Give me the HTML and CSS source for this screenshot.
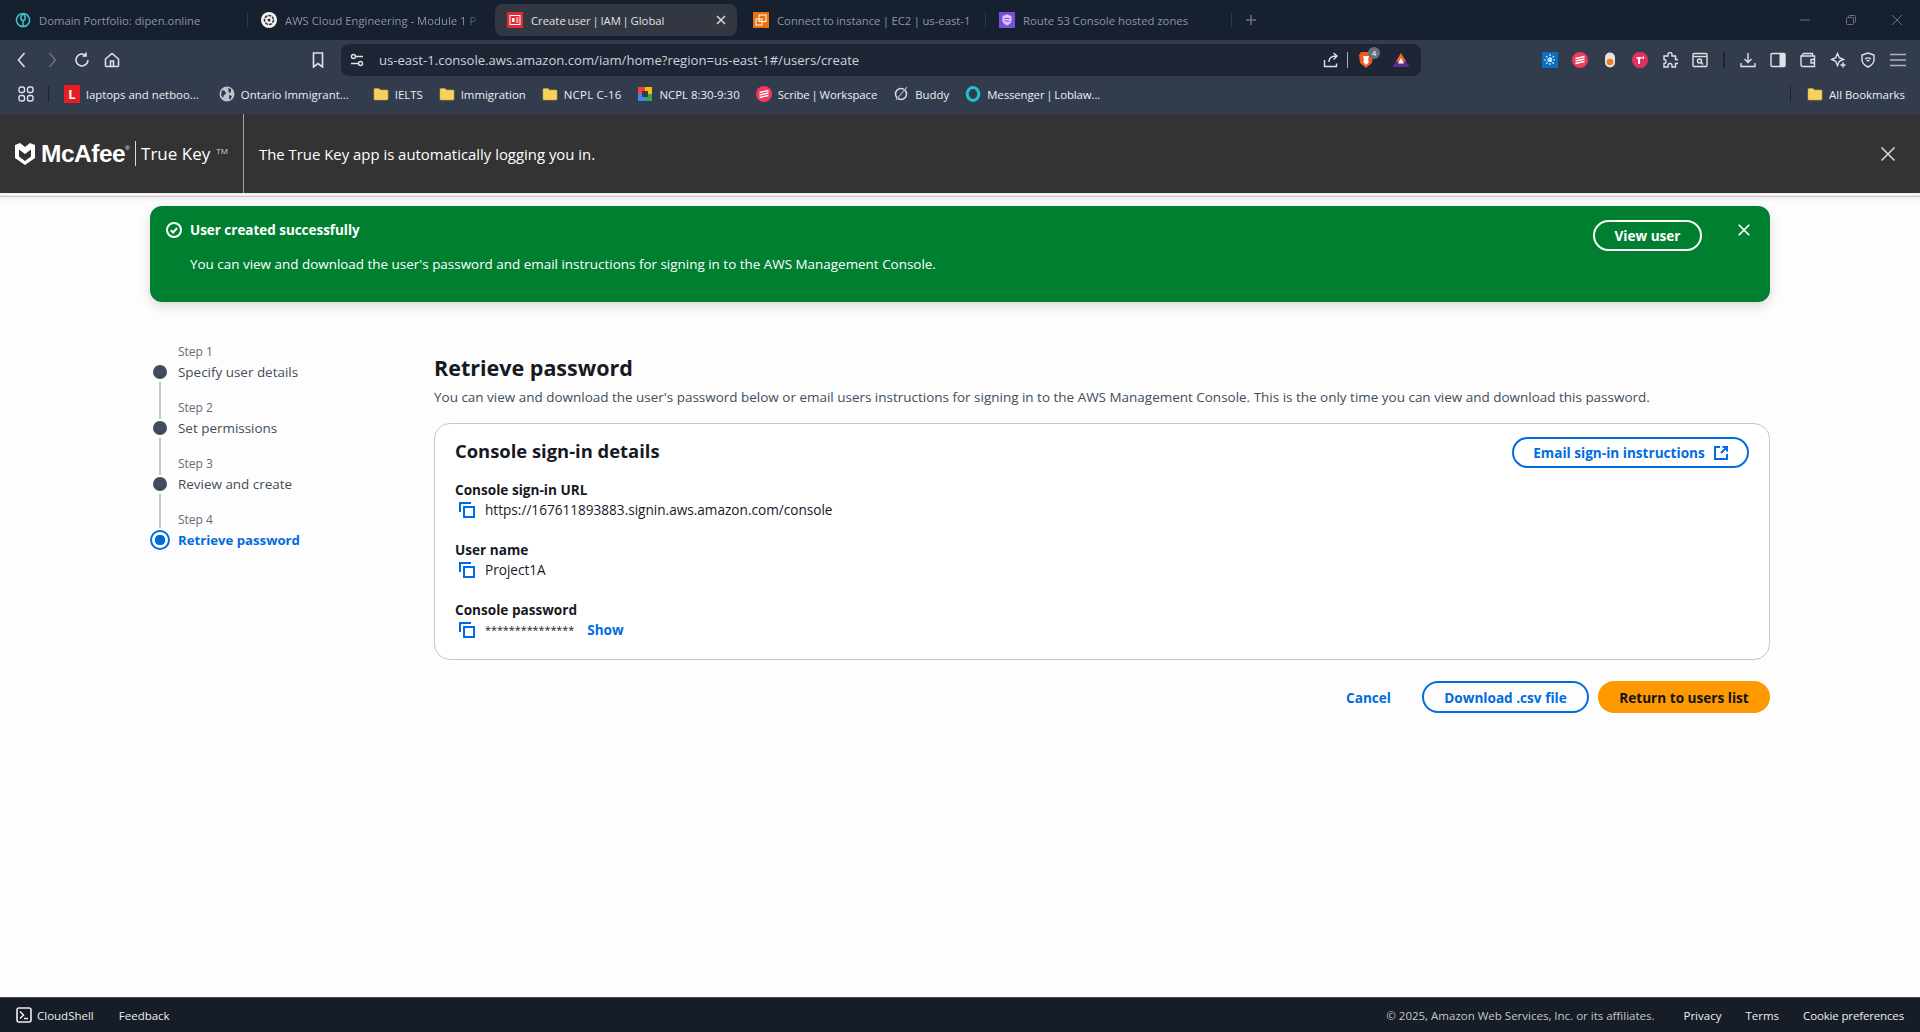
FILE: index.html
```html
<!DOCTYPE html>
<html lang="en">
<head>
    <meta charset="UTF-8">
    <title>Create user | IAM | Global</title>
    <link rel="stylesheet" href="styles.css">
</head>
<body>

    <!-- browser tabs -->
    <div class="tabstrip">
        <div class="tab tab-first">
            <svg class="fav" viewBox="0 0 16 16"><path d="M8 1.500a6.500 6.500 0 1 0 .01 0M8 1.500C5 5 5 8 8 8.500M8 14.500V8.500C11 8 11 5 8 1.500" fill="none" stroke="#3fc1c9" stroke-width="1.500"/></svg>
            <span class="tab-title">Domain Portfolio: dipen.online</span>
        </div>
        <div class="tab tab-sep">
            <svg class="fav" viewBox="0 0 16 16"><circle cx="8" cy="8" r="8" fill="#f2f2f2"/><circle cx="8" cy="8" r="4.500" fill="none" stroke="#333" stroke-width="1.600" stroke-dasharray="3 1"/><circle cx="8" cy="8" r="1.500" fill="#333"/></svg>
            <span class="tab-title tab-fade">AWS Cloud Engineering - Module 1 P</span>
        </div>
        <div class="tab tab-active">
            <svg class="fav" viewBox="0 0 16 16"><rect width="16" height="16" fill="#dd2b36"/><rect x="3" y="3.500" width="10" height="9" fill="none" stroke="#fff"/><rect x="5" y="6" width="2.500" height="4" fill="#fff"/><path d="M9 6h2.500M9 8h2.500M9 10h2.500" stroke="#fff"/></svg>
            <span class="tab-title">Create user | IAM | Global</span>
            <svg class="tab-close" viewBox="0 0 10 10"><path d="M1 1l8 8M9 1l-8 8" stroke="#d8dade" stroke-width="1.500"/></svg>
        </div>
        <div class="tab tab-fourth">
            <svg class="fav" viewBox="0 0 16 16"><rect width="16" height="16" fill="#e8730c"/><rect x="6" y="3" width="7" height="6.500" fill="none" stroke="#fff"/><rect x="3" y="7" width="6" height="6" fill="none" stroke="#fff"/></svg>
            <span class="tab-title">Connect to instance | EC2 | us-east-1</span>
        </div>
        <div class="tab tab-sep">
            <svg class="fav" viewBox="0 0 16 16"><rect width="16" height="16" fill="#7a4fd8"/><path d="M8 2.500l4.500 1.500v4.500c0 2.500-2.500 4-4.500 5-2-1-4.500-2.500-4.500-5V4z" fill="#d8c8f6"/><path d="M5.500 6.500h5M5.500 9h5" stroke="#7a4fd8"/></svg>
            <span class="tab-title">Route 53 Console hosted zones</span>
        </div>
        <div class="tab-sep new-tab">
            <svg viewBox="0 0 12 12"><path d="M6 1v10M1 6h10" stroke="#69717e" stroke-width="1.500"/></svg>
        </div>
        <div class="win-controls">
            <svg viewBox="0 0 12 12"><path d="M1 6h10" stroke="#69717e"/></svg>
            <svg viewBox="0 0 12 12"><rect x="1.500" y="3.500" width="7" height="7" rx="1" fill="none" stroke="#69717e"/><path d="M3.500 3.500V2.500a1 1 0 0 1 1-1h5a1 1 0 0 1 1 1v5a1 1 0 0 1-1 1" fill="none" stroke="#69717e"/></svg>
            <svg viewBox="0 0 12 12"><path d="M1 1l10 10M11 1L1 11" stroke="#69717e"/></svg>
        </div>
    </div>

    <!-- address bar row -->
    <div class="toolbar">
        <div class="tool"><svg viewBox="0 0 16 16"><path d="M10.500 1L4.500 8l6 7" class="line"/></svg></div>
        <div class="tool"><svg viewBox="0 0 16 16"><path d="M5.500 1l6 7-6 7" class="line line-dim"/></svg></div>
        <div class="tool"><svg viewBox="0 0 16 16"><path d="M14 8a6 6 0 1 1-2-4.500M12 .5v3.500H8.500" class="line"/></svg></div>
        <div class="tool"><svg viewBox="0 0 16 16"><path d="M1.500 7L8 1.500 14.500 7v6.500a1 1 0 0 1-1 1h-11a1 1 0 0 1-1-1zM6.500 14.500V9h3v5.500" class="line"/></svg></div>
        <div class="tool tool-mark"><svg viewBox="0 0 16 16"><path d="M3.500 1h9v14L8 11.500 3.500 15z" class="line"/></svg></div>

        <div class="address">
            <svg class="addr-icon" viewBox="0 0 16 16"><circle cx="4.500" cy="4.500" r="2" class="line thin"/><circle cx="11.500" cy="11.500" r="2" class="line thin"/><path d="M7 4.500h7M2 11.500h7" class="line thin"/></svg>
            <span class="url">us-east-1.console.aws.amazon.com/iam/home?region=us-east-1#/users/create</span>
            <div class="addr-right">
                <svg class="addr-icon" viewBox="0 0 16 16"><path d="M1.500 8v6.500h12v-3M6 10c0-4 3-6 7-6M10.500 1l3.500 3-3.500 3.500" class="line thin"/></svg>
                <span class="addr-sep"></span>
                <span class="brave">
                    <svg viewBox="0 0 16 18"><path d="M3 1h10l2 3-1 8-6 5-6-5-1-8z" fill="#f15a22"/><path d="M5 5h6l-1 4 1 2-3 3-3-3 1-2z" fill="#fff"/></svg>
                    <span class="brave-badge">4</span>
                </span>
                <svg class="rewards" viewBox="0 0 18 16"><path d="M9 1l8.500 14H.5z" fill="#5e2a90"/><path d="M9 1l5 8.500H4z" fill="#f26b21"/><path d="M9 6l3 5.500H6z" fill="#fff"/></svg>
            </div>
        </div>

        <div class="tool-right">
            <div class="tool"><svg viewBox="0 0 16 16"><rect width="16" height="16" rx="1" fill="#0a6fc2"/><path d="M8 2v12M2 8h12M4 4l8 8M12 4l-8 8" stroke="#dff1ff" stroke-width="1.200" stroke-dasharray="2 1"/></svg></div>
            <div class="tool"><svg viewBox="0 0 16 16"><circle cx="8" cy="8" r="8" fill="#f0395f"/><path d="M3.500 6.500l9-2M3.500 9l9-2M3.500 11.500l9-2" stroke="#fff" stroke-width="1.300"/></svg></div>
            <div class="tool"><svg viewBox="0 0 16 16"><rect x="3" y="0.500" width="10" height="15" rx="5" fill="#e8e4dc"/><circle cx="8" cy="10" r="3.300" fill="#f07a22"/></svg></div>
            <div class="tool"><svg viewBox="0 0 16 16"><circle cx="8" cy="8" r="8" fill="#e8305f"/><path d="M4.500 5h5v1.800H8V12H6V6.800H4.500zM10.500 4.500h1.500V7h-1.500z" fill="#fff"/></svg></div>
            <div class="tool"><svg viewBox="0 0 16 16"><path d="M6 2.500a2 2 0 0 1 4 0V4h3.500v3.500H15a2 2 0 0 1 0 4h-1.500V15H10v-1.500a2 2 0 0 0-4 0V15H2v-3.500a2 2 0 0 0 0-4V4h4z" class="line thin"/></svg></div>
            <div class="tool"><svg viewBox="0 0 16 16"><rect x="1" y="1.500" width="14" height="13" rx="1" class="line thin"/><path d="M1 4.500h14" class="line thin"/><circle cx="7.500" cy="9" r="2" class="line thin"/><path d="M9 10.500l2 2" class="line thin"/></svg></div>
            <span class="tool-sep"></span>
            <div class="tool"><svg viewBox="0 0 16 16"><path d="M8 1v9M4.500 7L8 10.500 11.500 7M1 11v3.500h14V11" class="line thin"/></svg></div>
            <div class="tool"><svg viewBox="0 0 16 16"><rect x="1" y="1.500" width="14" height="13" rx="1" class="line thin"/><rect x="9.500" y="1.500" width="5.500" height="13" fill="#dfe2e7"/></svg></div>
            <div class="tool"><svg viewBox="0 0 16 16"><path d="M2.500 4V3a1.500 1.500 0 0 1 1.500-1.500h8.500V4M1 4h13.500v10.500H2.500A1.500 1.500 0 0 1 1 13zM15 7.500h-4v3.500h4" class="line thin"/></svg></div>
            <div class="tool"><svg viewBox="0 0 16 16"><path d="M7.500 1.500l1.800 4.200 4.200 1.800-4.200 1.800-.8 2-1 2.200-1.800-4.200L1.500 7.500l4.200-1.800z" class="line thin"/><path d="M13 10.500v5M10.500 13h5" stroke="#dfe2e7" stroke-width="1.500"/></svg></div>
            <div class="tool"><svg viewBox="0 0 16 16"><path d="M8 1l6 2v5c0 3.500-3 5.500-6 7-3-1.500-6-3.500-6-7V3zM5 7c2-1.500 4-1.500 6 0M6.500 9c1-.7 2-.7 3 0" class="line thin"/></svg></div>
            <div class="tool"><svg viewBox="0 0 16 16"><path d="M0 2.500h16M0 8h16M0 13.500h16" stroke="#aeb3bb" stroke-width="1.500"/></svg></div>
        </div>
    </div>

    <!-- bookmarks -->
    <div class="bookmarks">
        <svg class="apps" viewBox="0 0 16 16"><rect x="1" y="1" width="5.500" height="5.500" rx="2" class="line thin"/><rect x="9.500" y="1" width="5.500" height="5.500" rx="2" class="line thin"/><rect x="1" y="9.500" width="5.500" height="5.500" rx="2" class="line thin"/><rect x="9.500" y="9.500" width="5.500" height="5.500" rx="2" class="line thin"/></svg>
        <span class="bm-sep bm-sep-first"></span>
        <div class="bm bm-laptops"><span class="bm-l">L</span><span>laptops and netboo...</span></div>
        <div class="bm bm-ontario"><svg viewBox="0 0 16 16"><circle cx="8" cy="8" r="7.500" fill="#bfc3ca"/><path d="M3 4l3 1 1 3-2 1-1 3-2-3zM9 2l3 1v3l-2 1zM10 9l3 1-2 4-1-2z" fill="#333c4d"/></svg><span>Ontario Immigrant...</span></div>
        <div class="bm bm-ielts"><svg viewBox="0 0 16 14"><use href="#folder"/></svg><span>IELTS</span></div>
        <div class="bm"><svg viewBox="0 0 16 14"><use href="#folder"/></svg><span>Immigration</span></div>
        <div class="bm"><svg viewBox="0 0 16 14"><use href="#folder"/></svg><span class="bm-ncpl">NCPL C-16</span></div>
        <div class="bm"><svg viewBox="0 0 16 16"><rect x="1" y="1" width="7" height="7" fill="#e8453c"/><rect x="8" y="1" width="7" height="7" fill="#fbbc04"/><rect x="1" y="8" width="7" height="7" fill="#4285f4"/><rect x="8" y="8" width="7" height="7" fill="#34a853"/><rect x="5" y="5" width="6" height="6" fill="#333c4d"/></svg><span>NCPL 8:30-9:30</span></div>
        <div class="bm"><svg viewBox="0 0 16 16"><circle cx="8" cy="8" r="8" fill="#f0395f"/><path d="M3.500 6.500l9-2M3.500 9l9-2M3.500 11.500l9-2" stroke="#fff" stroke-width="1.300"/></svg><span class="bm-scribe">Scribe | Workspace</span></div>
        <div class="bm"><svg viewBox="0 0 16 16"><circle cx="8" cy="8" r="5.500" fill="none" stroke="#d8dade" stroke-width="1.500"/><path d="M3 14L14 1" stroke="#9aa0a9" stroke-width="1.200"/></svg><span>Buddy</span></div>
        <div class="bm"><svg viewBox="0 0 16 16"><ellipse cx="8" cy="8" rx="5.800" ry="6.500" fill="none" stroke="#1fc1cf" stroke-width="3"/></svg><span class="bm-scribe">Messenger | Loblaw...</span></div>
        <div class="bm-end">
            <span class="bm-sep"></span>
            <div class="bm"><svg viewBox="0 0 16 14"><use href="#folder"/></svg><span>All Bookmarks</span></div>
        </div>
    </div>

    <!-- true key banner -->
    <div class="truekey">
        <div class="tk-brand">
            <svg class="tk-shield" viewBox="0 0 20 22"><path d="M0 2l5-2 5 4 5-4 5 2v13l-10 7-10-7z" fill="#fff"/><path d="M4 6.500v7l6 4.500 6-4.500v-7L10 11z" fill="#333"/></svg>
            <span class="tk-mcafee">McAfee<span class="tk-reg">®</span></span>
            <span class="tk-divider"></span>
            <span class="tk-product">True Key</span>
            <span class="tk-tm">TM</span>
        </div>
        <div class="tk-message">The True Key app is automatically logging you in.</div>
        <svg class="tk-close" viewBox="0 0 16 16"><path d="M1.500 1.500l13 13M14.500 1.500l-13 13" stroke="#d8dade" stroke-width="1.500"/></svg>
    </div>
    <div class="tk-edge"></div>

    <!-- console page -->
    <main class="page">
        <div class="flash">
            <svg class="flash-icon" viewBox="0 0 16 16"><circle cx="8" cy="8" r="7" fill="none" stroke="#fff" stroke-width="2"/><path d="M4.800 8.200l2.300 2.300 4-4.500" fill="none" stroke="#fff" stroke-width="2"/></svg>
            <div class="flash-body">
                <div class="flash-title">User created successfully</div>
                <div class="flash-text">You can view and download the user's password and email instructions for signing in to the AWS Management Console.</div>
            </div>
            <button class="btn btn-flash">View user</button>
            <svg class="flash-close" viewBox="0 0 16 16"><path d="M2 2l12 12M14 2L2 14" stroke="#fff" stroke-width="2"/></svg>
        </div>

        <div class="wizard">
            <ol class="steps">
                <li class="step">
                    <div class="step-mark"><span class="step-line step-line-none"></span><span class="step-dot"></span></div>
                    <div class="step-text"><small>Step 1</small><span>Specify user details</span></div>
                </li>
                <li class="step">
                    <div class="step-mark"><span class="step-line"></span><span class="step-dot"></span></div>
                    <div class="step-text"><small>Step 2</small><span>Set permissions</span></div>
                </li>
                <li class="step">
                    <div class="step-mark"><span class="step-line"></span><span class="step-dot"></span></div>
                    <div class="step-text"><small>Step 3</small><span>Review and create</span></div>
                </li>
                <li class="step step-current">
                    <div class="step-mark"><span class="step-line"></span><span class="step-ring"></span></div>
                    <div class="step-text"><small>Step 4</small><span>Retrieve password</span></div>
                </li>
            </ol>

            <div class="content">
                <h1>Retrieve password</h1>
                <p class="lead">You can view and download the user's password below or email users instructions for signing in to the AWS Management Console. This is the only time you can view and download this password.</p>

                <section class="card">
                    <div class="card-head">
                        <h2>Console sign-in details</h2>
                        <button class="btn btn-normal btn-email">Email sign-in instructions
                            <svg viewBox="0 0 14 14"><path d="M6 1H1v12h12V8M8.500 1H13v4.500M13 1L7 7" fill="none" stroke="currentColor" stroke-width="2"/></svg>
                        </button>
                    </div>

                    <div class="field">
                        <div class="field-label">Console sign-in URL</div>
                        <div class="field-value"><svg class="copy" viewBox="0 0 16 16"><use href="#copy"/></svg><span>https://167611893883.signin.aws.amazon.com/console</span></div>
                    </div>
                    <div class="field">
                        <div class="field-label">User name</div>
                        <div class="field-value"><svg class="copy" viewBox="0 0 16 16"><use href="#copy"/></svg><span>Project1A</span></div>
                    </div>
                    <div class="field">
                        <div class="field-label">Console password</div>
                        <div class="field-value"><svg class="copy" viewBox="0 0 16 16"><use href="#copy"/></svg><span class="stars">***************</span><a class="show" href="#">Show</a></div>
                    </div>
                </section>

                <div class="actions">
                    <a class="cancel" href="#">Cancel</a>
                    <button class="btn btn-normal btn-download">Download .csv file</button>
                    <button class="btn btn-primary">Return to users list</button>
                </div>
            </div>
        </div>
    </main>

    <footer class="shell-foot">
        <svg class="shell-icon" viewBox="0 0 16 16"><rect x="1" y="1" width="14" height="14" rx="2" fill="none" stroke="#eceef1" stroke-width="1.600"/><path d="M4 4.500L7.500 8 4 11.500M8 11.500h4" fill="none" stroke="#eceef1" stroke-width="1.500"/></svg>
        <span class="foot-cloud">CloudShell</span>
        <span class="foot-feedback">Feedback</span>
        <span class="foot-copy">© 2025, Amazon Web Services, Inc. or its affiliates.</span>
        <span class="foot-link">Privacy</span>
        <span class="foot-link">Terms</span>
        <span class="foot-link foot-cookie">Cookie preferences</span>
    </footer>

    <!-- shared icons -->
    <svg class="defs" aria-hidden="true">
        <symbol id="folder" viewBox="0 0 16 14"><path d="M1 2.500a1 1 0 0 1 1-1h4l1.500 1.500H14a1 1 0 0 1 1 1v8a1 1 0 0 1-1 1H2a1 1 0 0 1-1-1z" fill="#f7d15e" stroke="#c9a440" stroke-width=".6"/></symbol>
        <symbol id="copy" viewBox="0 0 16 16"><path d="M1 10V1h11" fill="none" stroke="#006ce0" stroke-width="2"/><rect x="5" y="5" width="10" height="10" fill="none" stroke="#006ce0" stroke-width="2"/></symbol>
    </svg>

</body>
</html>
```

FILE: styles.css
```css
/* General styling */
* {
    box-sizing: border-box;
}

body {
    margin: 0;
    height: 1032px;
    overflow: hidden;
    display: flex;
    flex-direction: column;
    font-family: 'Open Sans', sans-serif;
    background-color: #fdfdfd;
    color: #16191f;
}

.line {
    fill: none;
    stroke: #dfe2e7;
    stroke-width: 1.6;
}

.line-dim {
    stroke: #69717e;
}

.thin {
    stroke-width: 1.4;
}

.defs {
    display: none;
}

/* Tabs */
.tabstrip {
    height: 40px;
    flex-shrink: 0;
    display: flex;
    align-items: flex-start;
    background-color: #17202f;
    font-size: 11.3px;
    color: #8d95a2;
}

.tab {
    height: 40px;
    width: 246px;
    display: flex;
    align-items: center;
    gap: 8px;
    padding-left: 14px;
}

.tab-first {
    width: 247px;
    padding-left: 15px;
}

.tab-sep {
    background: linear-gradient(#2f3848, #2f3848) left center / 1px 16px no-repeat;
}

.tab-active {
    width: 242px;
    height: 32px;
    margin: 4px 0 0 2px;
    padding: 0 11px 0 12px;
    border-radius: 8px;
    background-color: #333741;
    color: #dfe2e7;
    word-spacing: -1.2px;
}

.tab-fourth {
    width: 248px;
    padding-left: 16px;
    word-spacing: -.5px;
}

.tab-title {
    overflow: hidden;
    white-space: nowrap;
}

.tab-fade {
    width: 198px;
    -webkit-mask-image: linear-gradient(to right, #000 90%, transparent);
}

.fav {
    width: 16px;
    height: 16px;
    flex-shrink: 0;
}

.tab-close {
    width: 10px;
    height: 10px;
    margin-left: auto;
}

.new-tab {
    width: 40px;
    height: 40px;
    display: flex;
    align-items: center;
    padding-left: 14px;
}

.new-tab svg {
    width: 12px;
    height: 12px;
}

.win-controls {
    margin-left: auto;
    height: 40px;
    padding-right: 17px;
    display: flex;
    align-items: center;
    gap: 34px;
}

.win-controls svg {
    width: 12px;
    height: 12px;
}

/* Toolbar */
.toolbar {
    height: 36px;
    flex-shrink: 0;
    padding: 4px 7px 0;
    display: flex;
    background-color: #333c4d;
}

.tool {
    width: 30px;
    height: 32px;
    display: flex;
    align-items: center;
    justify-content: center;
    flex-shrink: 0;
}

.tool svg {
    width: 16px;
    height: 16px;
}

.tool-mark {
    margin-left: 176px;
}

.address {
    width: 1080px;
    height: 32px;
    margin-left: 8px;
    padding: 0 11px 0 8px;
    display: flex;
    align-items: center;
    gap: 14px;
    border-radius: 8px;
    background-color: #1e2636;
}

.url {
    font-size: 13.1px;
    color: #cfd3d9;
}

.addr-icon {
    width: 16px;
    height: 16px;
}

.addr-right {
    margin-left: auto;
    display: flex;
    align-items: center;
}

.addr-sep {
    width: 1px;
    height: 16px;
    margin: 0 10px 0 8px;
    background-color: #aeb3bb;
}

.brave {
    position: relative;
    width: 16px;
    height: 18px;
    margin-right: 18px;
}

.brave svg {
    width: 16px;
    height: 18px;
    display: block;
}

.brave-badge {
    position: absolute;
    top: -4px;
    left: 10px;
    width: 12px;
    height: 12px;
    border-radius: 50%;
    background-color: #6a6e78;
    color: #fff;
    font-size: 8px;
    line-height: 12px;
    text-align: center;
}

.rewards {
    width: 18px;
    height: 16px;
}

.tool-right {
    margin-left: 114px;
    display: flex;
    align-items: center;
}

.tool-sep {
    width: 18px;
    height: 16px;
    background: linear-gradient(#1e2636, #1e2636) 8px center / 2px 16px no-repeat;
}

/* Bookmarks */
.bookmarks {
    height: 38px;
    flex-shrink: 0;
    padding: 0 15px 2px 18px;
    display: flex;
    align-items: center;
    gap: 16px;
    background-color: #333c4d;
    color: #eceef1;
    font-size: 11.4px;
}

.apps {
    width: 16px;
    height: 16px;
}

.bm-sep {
    width: 1px;
    height: 16px;
    background-color: #1e2636;
}

.bm-sep-first {
    margin: 0 -1px 0 -2px;
}

.bm {
    display: flex;
    align-items: center;
    gap: 6px;
    white-space: nowrap;
}

.bm svg {
    width: 16px;
    height: 16px;
}

.bm-ontario {
    margin-left: 4px;
}

.bm-ielts {
    margin-left: 8px;
}

.bm-ncpl {
    letter-spacing: .25px;
}

.bm-scribe {
    word-spacing: -1px;
    letter-spacing: -.1px;
}

.bm-l {
    width: 16px;
    height: 18px;
    background-color: #e31e24;
    color: #fff;
    font-weight: 700;
    font-size: 13px;
    line-height: 18px;
    text-align: center;
}

.bm-end {
    margin-left: auto;
    display: flex;
    align-items: center;
    gap: 16px;
}

/* True Key banner */
.truekey {
    height: 79px;
    flex-shrink: 0;
    display: flex;
    align-items: center;
    background-color: #333333;
    color: #fff;
}

.tk-brand {
    width: 244px;
    height: 100%;
    padding-left: 15px;
    display: flex;
    align-items: center;
    border-right: 1px solid #a0a0a0;
}

.tk-shield {
    width: 20px;
    height: 22px;
    margin-right: 6px;
}

.tk-mcafee {
    font-family: 'Liberation Sans', sans-serif;
    font-weight: 700;
    font-size: 24.5px;
    letter-spacing: -.5px;
}

.tk-reg {
    font-size: 6px;
    vertical-align: 12px;
    font-weight: 400;
}

.tk-divider {
    width: 1px;
    height: 25px;
    margin: 0 5px 0 6px;
    background-color: #d8dade;
}

.tk-product {
    font-size: 17px;
}

.tk-tm {
    margin: -6px 0 0 6px;
    font-size: 8px;
    color: #d8dade;
}

.tk-message {
    padding-left: 15px;
    font-size: 14.9px;
}

.tk-close {
    width: 16px;
    height: 16px;
    margin: 0 24px 0 auto;
}

.tk-edge {
    height: 4px;
    flex-shrink: 0;
    border-bottom: 1px solid #c4c4c4;
    background-color: #f1f1f1;
    box-shadow: 0 2px 4px rgba(0, 0, 0, .08);
}

/* Page */
.page {
    flex: 1;
    padding: 9px 150px 0;
}

.flash {
    height: 96px;
    padding: 14px 19px 0 16px;
    display: flex;
    align-items: flex-start;
    gap: 8px;
    border-radius: 12px;
    background-color: #007f31;
    box-shadow: 0 4px 12px rgba(0, 0, 0, .15);
    color: #fff;
}

.flash-icon {
    width: 16px;
    height: 16px;
    margin-top: 2px;
}

.flash-body {
    flex: 1;
    font-size: 13.45px;
    line-height: 20px;
}

.flash-title {
    font-weight: 700;
    margin-bottom: 14px;
}

.flash-close {
    width: 14px;
    height: 14px;
    margin: 3px 0 0 27px;
}

.btn {
    height: 31px;
    border-radius: 16px;
    background: none;
    font-family: inherit;
    font-weight: 700;
    font-size: 13.6px;
    cursor: pointer;
}

.btn-flash {
    width: 109px;
    border: 2px solid #fff;
    color: #fff;
}

.btn-normal {
    border: 2px solid #006ce0;
    color: #006ce0;
}

.btn-primary {
    width: 172px;
    border: none;
    background-color: #ff9900;
    color: #0f141a;
}

/* Wizard steps */
.wizard {
    display: grid;
    grid-template-columns: 284px 1fr;
    padding-top: 24px;
}

.steps {
    list-style: none;
    margin: 0;
    padding: 0;
}

.step {
    height: 56px;
    display: flex;
    gap: 8px;
}

.step-mark {
    width: 20px;
    display: flex;
    flex-direction: column;
    align-items: center;
}

.step-line {
    flex: 1;
    width: 2px;
    margin-bottom: 2px;
    background-color: #c6c6cd;
}

.step-line-none {
    background: none;
}

.step-dot {
    width: 14px;
    height: 14px;
    margin-bottom: 3px;
    border-radius: 50%;
    background-color: #414d5c;
}

.step-ring {
    width: 20px;
    height: 20px;
    border: 2px solid #006ce0;
    border-radius: 50%;
    background: radial-gradient(circle, #006ce0 5px, #fff 5.500px);
}

.step-text {
    display: flex;
    flex-direction: column;
    justify-content: flex-end;
    font-size: 13.45px;
    line-height: 20px;
    color: #414d5c;
}

.step-text small {
    font-size: 12px;
    line-height: 18px;
    margin-bottom: 1px;
    color: #5f6b7a;
}

.step-current .step-text span {
    font-weight: 700;
    font-size: 13.2px;
    color: #006ce0;
}

/* Main column */
.content {
    padding-top: 27px;
}

h1 {
    margin: 0;
    font-size: 21.5px;
    line-height: 30px;
    font-weight: 700;
}

.lead {
    margin: 4px 0 16px;
    font-size: 13.47px;
    line-height: 20px;
    color: #414d5c;
    white-space: nowrap;
}

.card {
    height: 237px;
    padding: 13px 20px 0;
    border: 1px solid #c6c6cd;
    border-radius: 16px;
    background-color: #fff;
}

.card-head {
    display: flex;
    justify-content: space-between;
    margin-bottom: 12px;
}

h2 {
    margin: 2px 0 0;
    font-size: 18.4px;
    line-height: 24px;
    font-weight: 700;
}

.btn-email {
    width: 237px;
    display: flex;
    align-items: center;
    justify-content: center;
    gap: 9px;
}

.btn-email svg {
    width: 14px;
    height: 14px;
}

.field {
    margin-bottom: 20px;
    font-size: 13.6px;
    line-height: 20px;
}

.field-label {
    font-weight: 700;
}

.field-value {
    display: flex;
    align-items: center;
    padding-left: 4px;
}

.copy {
    width: 16px;
    height: 16px;
    margin-right: 10px;
}

.stars {
    font-size: 10.8px;
}

.show {
    margin-left: 13px;
    font-weight: 700;
    color: #006ce0;
    text-decoration: none;
}

.actions {
    margin-top: 21px;
    display: flex;
    justify-content: flex-end;
    align-items: center;
}

.cancel {
    margin-right: 31px;
    font-size: 13.6px;
    font-weight: 700;
    color: #006ce0;
    text-decoration: none;
}

.btn-download {
    width: 167px;
    height: 32px;
    margin-right: 9px;
}

.btn-primary {
    height: 32px;
}

/* Footer */
.shell-foot {
    height: 35px;
    flex-shrink: 0;
    padding: 0 16px;
    display: flex;
    align-items: center;
    border-top: 1px solid #414d5c;
    background-color: #161d26;
    color: #eceef1;
    font-size: 11.5px;
}

.shell-icon {
    width: 16px;
    height: 16px;
    margin-right: 5px;
}

.foot-feedback {
    margin-left: 25px;
}

.foot-copy {
    margin-left: auto;
    margin-right: 5px;
    color: #c6c6cd;
}

.foot-link {
    margin-left: 24px;
}

.foot-cookie {
    letter-spacing: -.15px;
}
```
